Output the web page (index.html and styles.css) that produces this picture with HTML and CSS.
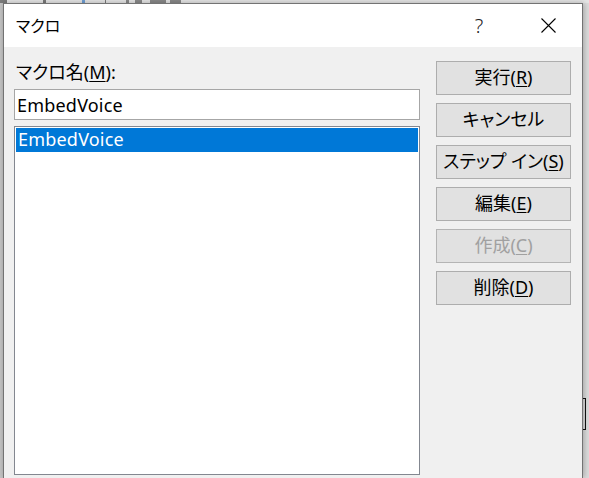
FILE: index.html
```html
<!DOCTYPE html>
<html lang="ja">
<head>
<meta charset="utf-8">
<title>マクロ</title>
<link rel="stylesheet" href="styles.css">
</head>
<body>
<div class="backdrop">
  <div class="bg-top">
    <span class="mark m1"></span>
    <span class="mark m2"></span>
    <span class="mark m3"></span>
    <span class="mark m4"></span>
    <span class="mark m5"></span>
  </div>
  <div class="bg-bracket"></div>
</div>
<div class="screen">
  <div class="dialog">
    <div class="titlebar">
      <div class="title">マクロ</div>
      <div class="caption-btn help">?</div>
      <div class="caption-btn close">
        <svg width="15" height="15" viewBox="0 0 15 15"><path d="M0.5 0.5 L14.5 14.5 M14.5 0.5 L0.5 14.5" stroke="#000" stroke-width="1.1" fill="none"/></svg>
      </div>
    </div>
    <div class="content">
      <div class="left">
        <div class="label">マクロ名(<u>M</u>):</div>
        <input class="name" type="text" value="EmbedVoice">
        <div class="list">
          <div class="item selected">EmbedVoice</div>
        </div>
      </div>
      <div class="buttons">
        <div class="btn">実行(<u>R</u>)</div>
        <div class="btn">キャンセル</div>
        <div class="btn">ステップ イン(<u>S</u>)</div>
        <div class="btn">編集(<u>E</u>)</div>
        <div class="btn disabled">作成(<u>C</u>)</div>
        <div class="btn">削除(<u>D</u>)</div>
      </div>
    </div>
  </div>
</div>
</body>
</html>
```
FILE: styles.css
```css
html, body {
  margin: 0;
  padding: 0;
}
body {
  width: 589px;
  height: 478px;
  overflow: hidden;
  position: relative;
  background: linear-gradient(to right, #c4c4c4 0, #c4c4c4 3px, #dcdcdc 3px);
  font-family: "Noto Sans", "Noto Sans CJK JP", sans-serif;
  font-feature-settings: "palt";
  color: #000;
}
.backdrop {
  position: absolute;
  inset: 0;
}
.bg-top {
  display: flex;
  height: 3px;
  background: #e6e6e6;
}
.mark {
  display: block;
  height: 3px;
  background: #7a7a7a;
}
.m1 { width: 7px; }
.m2 { width: 3px; margin-left: 36px; }
.m3 { width: 3px; margin-left: 36px; background: #6f9fd4; }
.m4 { width: 1px; margin-left: 20px; }
.m5 { width: 55px; margin-left: 20px; background: linear-gradient(to right, #8a8a8a 0 3px, transparent 3px 9px, #8a8a8a 9px 16px, transparent 16px 24px, #8a8a8a 24px 40px, transparent 40px 44px, #8a8a8a 44px); }
.bg-bracket {
  position: absolute;
  left: 583px;
  top: 398px;
  width: 2px;
  height: 30px;
  border: 1px solid #111;
  border-left: none;
}
.screen {
  position: relative;
  padding: 3px 0 0 3px;
}
.dialog {
  width: 580px;
  height: 475px;
  box-sizing: border-box;
  border: 1px solid #737373;
  border-bottom: none;
  background: #f0f0f0;
  display: flex;
  flex-direction: column;
  box-shadow: 1px 0 6px rgba(0, 0, 0, 0.28);
}
.titlebar {
  height: 43px;
  background: #fff;
  display: flex;
  align-items: center;
  flex: none;
}
.title {
  flex: 1;
  padding-left: 12px;
  font-size: 16px;
  line-height: 22px;
  padding-top: 1px;
}
.caption-btn {
  width: 68px;
  height: 43px;
  display: flex;
  align-items: center;
  justify-content: center;
}
.help {
  font-size: 20px;
  font-weight: 300;
  color: #222;
  padding-right: 2px;
  box-sizing: border-box;
}
.close svg {
  display: block;
}
.content {
  display: flex;
  gap: 16px;
  padding: 14px 11px 0 10px;
}
.left {
  width: 406px;
  display: flex;
  flex-direction: column;
}
.label {
  font-size: 18px;
  line-height: 22px;
  height: 24px;
  padding-left: 2px;
}
.label u, .btn u {
  text-underline-offset: 2px;
  text-decoration-thickness: 1px;
}
.name {
  margin: 4px 0 0 0;
  width: 406px;
  height: 31px;
  box-sizing: border-box;
  border: 1px solid #a6a6a6;
  padding: 0 2px;
  font: inherit;
  font-size: 18px;
  letter-spacing: 0.2px;
  color: #000;
  background: #fff;
  outline: none;
}
.list {
  margin-top: 6px;
  height: 349px;
  box-sizing: border-box;
  border: 1px solid #838790;
  background: #fff;
  padding: 1px;
}
.item {
  height: 24px;
  line-height: 23px;
  font-size: 18px;
  letter-spacing: 0.2px;
  padding-left: 2px;
}
.selected {
  background: #0078d7;
  color: #fff;
}
.buttons {
  width: 135px;
  display: flex;
  flex-direction: column;
  gap: 8px;
}
.btn {
  height: 34px;
  box-sizing: border-box;
  border: 1px solid #adadad;
  background: #e1e1e1;
  font-size: 18px;
  line-height: 30px;
  text-align: center;
  white-space: nowrap;
}
.btn.disabled {
  color: #a0a0a0;
  border-color: #b4b4b4;
}
```
